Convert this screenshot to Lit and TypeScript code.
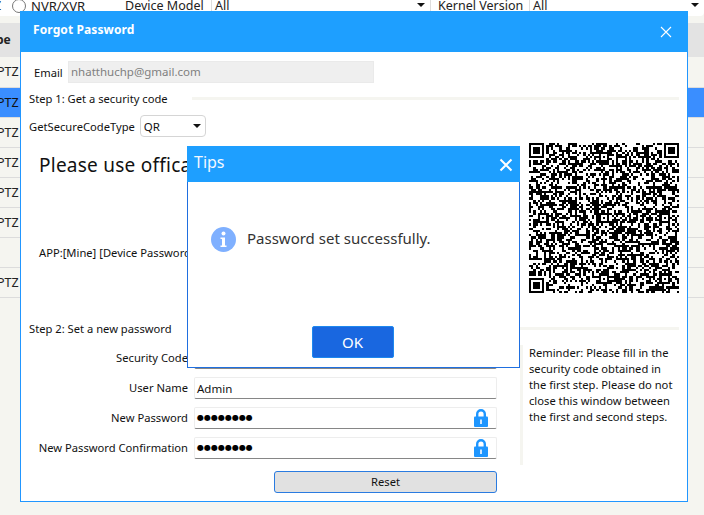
import { LitElement, html, css, svg } from "lit";
import { customElement } from "lit/decorators.js";

const N = 69;
function qrPath(): string {
  const m: number[][] = [];
  let s = 20240611;
  const rnd = () => { s = (s * 1664525 + 1013904223) >>> 0; return (s >>> 16) / 65536; };
  for (let y = 0; y < N; y++) { m.push([]); for (let x = 0; x < N; x++) m[y].push(rnd() < 0.5 ? 1 : 0); }
  const finder = (ox: number, oy: number) => {
    for (let y = -1; y < 8; y++) for (let x = -1; x < 8; x++) {
      const X = ox + x, Y = oy + y;
      if (X < 0 || Y < 0 || X >= N || Y >= N) continue;
      const inside = x >= 0 && x < 7 && y >= 0 && y < 7;
      const ring = x === 0 || x === 6 || y === 0 || y === 6;
      const core = x >= 2 && x <= 4 && y >= 2 && y <= 4;
      m[Y][X] = inside && (ring || core) ? 1 : 0;
    }
  };
  finder(0, 0); finder(N - 7, 0); finder(0, N - 7);
  const align = (cx: number, cy: number) => {
    for (let y = -2; y <= 2; y++) for (let x = -2; x <= 2; x++)
      m[cy + y][cx + x] = Math.max(Math.abs(x), Math.abs(y)) !== 1 ? 1 : 0;
  };
  for (const cy of [6, 34, 62]) for (const cx of [6, 34, 62]) {
    if ((cx === 6 && cy === 6) || (cx === 62 && cy === 6) || (cx === 6 && cy === 62)) continue;
    align(cx, cy);
  }
  let d = "";
  for (let y = 0; y < N; y++) for (let x = 0; x < N; x++) if (m[y][x]) d += `M${x} ${y}h1v1h-1z`;
  return d;
}
const QR = qrPath();

const lock = svg`<svg class="lock" viewBox="0 0 14 18" width="14" height="18"><path d="M3.2 8V5a3.8 3.8 0 0 1 7.6 0V8" fill="none" stroke="#1e96ff" stroke-width="2.4"/><rect x="0" y="7.5" width="14" height="10.5" rx="1" fill="#1e96ff"/><rect x="6" y="10.5" width="2" height="4.5" fill="#cfe6ff"/></svg>`;

@customElement("app-root")
export class AppRoot extends LitElement {
  static styles = css`
    :host {
      display: block;
      position: relative;
      width: 704px;
      height: 515px;
      overflow: hidden;
      background: #f5f5f0;
      font-family: "Noto Sans", "Open Sans", sans-serif;
      font-size: 11.2px;
      color: #111;
    }
    .filter {
      height: 23px;
      display: flex;
      align-items: flex-start;
      font-size: 12.5px;
      line-height: 12px;
      color: #222;
      overflow: hidden;
    }
    .filter > * { flex: none; background: #fff; height: 16px; }
    .lead { width: 12px; text-indent: -6px; overflow: hidden; }
    .radio-cell { width: 19px; }
    .radio {
      display: block; width: 14px; height: 14px; border: 1px solid #777; border-radius: 50%;
      margin-top: -1px; background: #fff; box-sizing: border-box;
    }
    .nvr { width: 94px; font-size: 13px; }
    .model { width: 86px; }
    .kernel { width: 99px; padding-left: 7px; box-sizing: border-box; border-left: 1px solid #ddd; }
    .fv { border-left: 1px solid #ddd; padding-left: 3px; box-sizing: border-box; display: flex; justify-content: space-between; }
    .fv1 { width: 219px; }
    .fv2 { width: 175px; border-bottom-right-radius: 4px; }
    .car { width: 0; height: 0; border-left: 4px solid transparent; border-right: 4px solid transparent; border-top: 4px solid #111; margin: 3px 5px 0 0; }
    .thead {
      height: 34px; background: #e3e3e3; font-weight: 700; font-size: 12px; line-height: 33px; color: #222;
      text-indent: -4px; overflow: hidden;
    }
    .row {
      height: 29px; border-bottom: 1px solid #dcdcdc;
      line-height: 30px; font-size: 12.5px; color: #222; text-indent: -3px;
    }
    .row.first { height: 30px; }
    .row.sel { background: #3a8eff; color: #111; }
    .dlg {
      position: absolute; left: 20px; top: 11px; width: 668px; height: 491px;
      box-sizing: border-box; background: #fff; border: 1px solid #2196ff; border-top: 0;
      display: flex; flex-direction: column;
    }
    .dh {
      margin: 0 -1px; height: 41px; background: #1e9fff; color: #fff; font-weight: 700; font-size: 12px;
      display: flex; align-items: center; justify-content: space-between; padding: 0 16px 4px 13px; box-sizing: border-box;
      flex: none; letter-spacing: 0.1px;
    }
    .dh svg { margin-top: 4px; }
    .body { display: grid; grid-template-columns: 500px 1fr; flex: 1; position: relative; padding-left: 8px; }
    .left { display: flex; flex-direction: column; min-width: 0; }
    .email { display: flex; align-items: center; height: 22px; margin-top: 9px; padding-left: 5px; }
    .email label { width: 34px; }
    .email .inp {
      width: 306px; height: 22px; box-sizing: border-box; border: 1px solid #eaeaea; background: #efefef;
      color: #808080; padding-left: 2px; line-height: 20px; font-size: 11.5px;
    }
    .hr { height: 3px; background: #f5f5f0; }
    .step1 { position: absolute; left: 8px; right: 8px; top: 38px; display: flex; align-items: center; gap: 24px; height: 16px; white-space: nowrap; }
    .step1 .hr { flex: 1; }
    .gs { display: flex; align-items: center; gap: 5px; margin-top: 32px; height: 22px; }
    .sel-box {
      width: 66px; height: 22px; box-sizing: border-box; border: 1px solid #d5d5d5; border-radius: 4px; background: #fff;
      display: flex; align-items: center; justify-content: space-between; padding: 0 0 0 3px; font-size: 11.5px;
    }
    .sel-box .car { margin: 0 4px 0 0; }
    .big { font-size: 19px; line-height: 26px; margin: 15px 0 0 10px; color: #111; white-space: nowrap; letter-spacing: 0.25px; height: 26px; }
    .app { margin: 67px 0 0 10px; white-space: nowrap; line-height: 16px; height: 16px; }
    .s2 { margin-top: 60px; line-height: 16px; height: 16px; }
    .form { display: grid; grid-template-columns: 159px 303px; column-gap: 6px; row-gap: 8px; margin-top: 10px; }
    .form label { text-align: right; line-height: 22px; height: 22px; }
    .f {
      height: 22px; box-sizing: border-box; border: 1px solid #ededed; border-bottom: 1px solid #868686; border-radius: 2px;
      display: flex; align-items: center; justify-content: space-between; padding: 0 8px 0 2px; background: #fff; font-size: 11.5px;
    }
    .dots { font-size: 8px; line-height: 20px; font-family: "DejaVu Sans", sans-serif; color: #000; }
    .reset {
      grid-column: 2; width: 223px; height: 22px; margin: 4px 0 0 80px; box-sizing: border-box;
      background: #e1e1e1; border: 1px solid #2a7be0; border-radius: 3px; text-align: center; line-height: 20px;
    }
    .right { display: flex; flex-direction: column; }
    .qr { width: 150px; height: 150px; display: block; margin-top: 91px; shape-rendering: crispEdges; }
    .hr2 { height: 3px; background: #f5f5f0; width: 159px; margin: 34px 0 0 -9px; }
    .rem {
      border-left: 3px solid #f5f5f0; margin: 15px 0 0 -9px; padding-left: 6px; height: 120px;
      width: 152px; line-height: 16px; box-sizing: content-box;
    }
    .tips {
      position: absolute; left: 187px; top: 146px; width: 333px; height: 222px; box-sizing: border-box;
      background: #fff; border: 1px solid #1f6fe0; border-top: 0; display: flex; flex-direction: column;
    }
    .th {
      margin: 0 -1px; height: 36px; flex: none; background: #1e9fff; color: #f3f8ff; font-size: 16px;
      display: flex; align-items: center; justify-content: space-between; padding: 0 7px 4px 7px; box-sizing: border-box;
    }
    .th svg { margin-top: 6px; }
    .msg { display: flex; align-items: center; gap: 11px; margin: 44px 0 0 23px; font-size: 15px; color: #333; height: 26px; }
    .msg span { position: relative; top: -1px; }
    .ok {
      align-self: center; margin-top: auto; margin-bottom: 9px; width: 82px; height: 32px; box-sizing: border-box;
      background: #1967e0; border: 1px solid #1e88ee; border-radius: 2px; color: #fff; font-size: 15px; text-align: center; line-height: 30px;
      position: relative; left: -1px;
    }
  `;

  render() {
    const rows = ["PTZ", "PTZ", "PTZ", "PTZ", "PTZ", "", "PTZ"];
    return html`
      <div class="filter">
        <span class="lead">Z</span>
        <span class="radio-cell"><span class="radio"></span></span>
        <span class="nvr">NVR/XVR</span>
        <span class="model">Device Model</span>
        <span class="fv fv1">All<span class="car"></span></span>
        <span class="kernel">Kernel Version</span>
        <span class="fv fv2">All<span class="car"></span></span>
      </div>
      <div class="thead">pe</div>
      <div class="row first">PTZ</div>
      ${rows.map((r, i) => html`<div class="row ${i === 0 ? "sel" : ""}">${r}</div>`)}

      <div class="dlg">
        <div class="dh"><span>Forgot Password</span>
          <svg width="12" height="12" viewBox="0 0 12 12"><path d="M1 1l10 10M11 1L1 11" stroke="#fff" stroke-width="1.1" fill="none"/></svg>
        </div>
        <div class="body">
          <div class="step1"><span>Step 1: Get a security code</span><span class="hr"></span></div>
          <div class="left">
            <div class="email"><label>Email</label><div class="inp">nhatthuchp@gmail.com</div></div>
            <div class="gs"><span>GetSecureCodeType</span>
              <div class="sel-box">QR<span class="car"></span></div></div>
            <div class="big">Please use officail app to scan</div>
            <div class="app">APP:[Mine] [Device Password]</div>
            <div class="s2">Step 2: Set a new password</div>
            <div class="form">
              <label>Security Code</label><div class="f"></div>
              <label>User Name</label><div class="f">Admin</div>
              <label>New Password</label><div class="f"><span class="dots">●●●●●●●●</span>${lock}</div>
              <label>New Password Confirmation</label><div class="f"><span class="dots">●●●●●●●●</span>${lock}</div>
              <div class="reset">Reset</div>
            </div>
          </div>
          <div class="right">
            <svg class="qr" viewBox="0 0 ${N} ${N}"><path d=${QR} fill="#000"/></svg>
            <div class="hr2"></div>
            <div class="rem">Reminder: Please fill in the security code obtained in the first step. Please do not close this window between the first and second steps.</div>
          </div>
        </div>
      </div>

      <div class="tips">
        <div class="th"><span>Tips</span>
          <svg width="14" height="14" viewBox="0 0 14 14"><path d="M1.5 1.5l11 11M12.5 1.5l-11 11" stroke="#fff" stroke-width="2" fill="none"/></svg>
        </div>
        <div class="msg">
          <svg width="25" height="25" viewBox="0 0 25 25"><circle cx="12.5" cy="12.5" r="12.5" fill="#7fb0ff"/><circle cx="12.5" cy="6.5" r="2" fill="#fff"/><path d="M9.5 10.5h4.5v8h1.5v1.5h-6v-1.5h1.5v-6.5h-1.5z" fill="#fff"/></svg>
          <span>Password set successfully.</span>
        </div>
        <div class="ok">OK</div>
      </div>
    `;
  }
}
